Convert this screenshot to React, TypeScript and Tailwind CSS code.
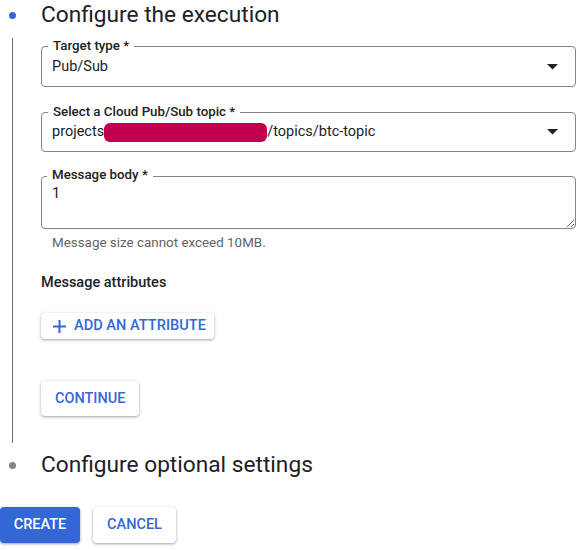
import React from "react";

const BLUE = "text-[#3367d6]";

const Caret = () => (
  <svg width="11" height="6" viewBox="0 0 11 6" className="shrink-0">
    <path d="M0 0 L11 0 L5.5 5.5 Z" fill="#202124" />
  </svg>
);

const FieldLabel = ({ children }: { children: React.ReactNode }) => (
  <span className="absolute left-[6px] -top-[9px] bg-white px-[5px] text-[13.3px] leading-[16px] font-medium text-[#202124]">
    {children}
  </span>
);

const SelectField = ({
  label,
  height,
  children,
}: {
  label: string;
  height: string;
  children: React.ReactNode;
}) => (
  <div
    className={`relative flex items-center justify-between rounded-[4px] border border-[#80868b] pl-[10px] pr-[17px] ${height}`}
  >
    <FieldLabel>{label}</FieldLabel>
    <div className="flex items-center text-[14.5px] leading-[20px] text-[#202124]">
      {children}
    </div>
    <Caret />
  </div>
);

const App = () => {
  return (
    <div
      className="w-[588px] h-[550px] bg-white overflow-hidden"
      style={{ fontFamily: "Roboto, 'Noto Sans', sans-serif" }}
    >
      {/* step 1 header */}
      <div className="flex items-center h-[30px]">
        <div className="w-[41px] flex">
          <span className="ml-[9px] w-[7px] h-[7px] rounded-full bg-[#3367d6]" />
        </div>
        <h1 className="text-[22.7px] leading-[28px] text-[#202124]">
          Configure the execution
        </h1>
      </div>

      {/* step 1 body */}
      <div className="flex mt-[8px]">
        <div className="w-[41px] shrink-0">
          <div className="ml-[12px] w-px h-full bg-[#6e6e6e]" />
        </div>
        <div className="flex-1 pr-[12px] pt-[8px] pb-[27px]">
          <SelectField label="Target type *" height="h-[41px]">
            Pub/Sub
          </SelectField>

          <div className="mt-[25px]">
            <SelectField label="Select a Cloud Pub/Sub topic *" height="h-[40px]">
              <span>projects</span>
              <span className="inline-block w-[163px] h-[19px] rounded-[6px] bg-[#c2004f]" />
              <span>/topics/btc-topic</span>
            </SelectField>
          </div>

          <div className="relative mt-[24px]">
            <FieldLabel>Message body *</FieldLabel>
            <textarea
              readOnly
              defaultValue="1"
              className="block w-full h-[53px] rounded-[4px] border border-[#80868b] pl-[10px] pt-[7px] text-[14.5px] leading-[20px] text-[#202124] outline-none"
            />
          </div>
          <p className="mt-[6px] pl-[11px] text-[13.4px] leading-[16px] text-[#5f6368]">
            Message size cannot exceed 10MB.
          </p>

          <p className="mt-[22px] text-[14.5px] leading-[20px] font-medium text-[#202124]">
            Message attributes
          </p>

          <button
            className={`mt-[20px] h-[26px] flex items-center gap-[8px] pl-[12px] pr-[8px] rounded-[4px] bg-white text-[14.6px] font-medium ${BLUE} shadow-[0_1px_2px_rgba(60,64,67,0.3),0_1px_3px_1px_rgba(60,64,67,0.15)]`}
          >
            <svg width="13" height="13" viewBox="0 0 13 13">
              <path d="M6.5 0 V13 M0 6.5 H13" stroke="#3367d6" strokeWidth="2" />
            </svg>
            ADD AN ATTRIBUTE
          </button>

          <button
            className={`mt-[42px] h-[35px] px-[14px] rounded-[4px] bg-white text-[14.5px] font-medium ${BLUE} shadow-[0_1px_2px_rgba(60,64,67,0.3),0_1px_3px_1px_rgba(60,64,67,0.15)]`}
          >
            CONTINUE
          </button>
        </div>
      </div>

      {/* step 2 header */}
      <div className="flex items-center h-[30px] mt-[7px]">
        <div className="w-[41px] flex">
          <span className="ml-[9px] w-[7px] h-[7px] rounded-full bg-[#80868b]" />
        </div>
        <h2 className="text-[22.7px] leading-[28px] text-[#202124]">
          Configure optional settings
        </h2>
      </div>

      {/* actions */}
      <div className="flex gap-[13px] mt-[27px]">
        <button className="h-[36px] w-[80px] rounded-[4px] bg-[#3367d6] text-white text-[14.5px] font-medium shadow-[0_1px_2px_rgba(60,64,67,0.3),0_1px_3px_1px_rgba(60,64,67,0.15)]">
          CREATE
        </button>
        <button
          className={`h-[36px] w-[83px] rounded-[4px] bg-white text-[14.5px] font-medium ${BLUE} shadow-[0_1px_2px_rgba(60,64,67,0.3),0_1px_3px_1px_rgba(60,64,67,0.15)]`}
        >
          CANCEL
        </button>
      </div>
    </div>
  );
};

export default App;
